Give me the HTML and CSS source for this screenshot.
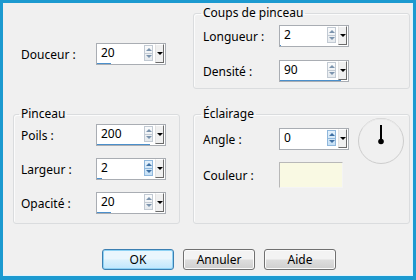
FILE: index.html
```html
<!DOCTYPE html>
<html>
<head>
    <title>Coups de pinceau</title>
    <link rel="stylesheet" href="styles.css">
</head>
<body>
    <div class="dialog">
        <div class="panes">
            <div class="single">
                <div class="row">
                    <label class="lbl">Douceur :</label>
                    <div class="spin">
                        <div class="spin-row"><span class="spin-value">20</span><span class="spin-arrows"><span class="up"></span><span class="down"></span></span><span class="spin-drop"></span></div>
                        <div class="spin-bar" style="width: 20%"></div>
                    </div>
                </div>
            </div>

            <fieldset class="group group-top">
                <legend>Coups de pinceau</legend>
                <div class="rows">
                    <div class="row">
                        <label class="lbl wide">Longueur :</label>
                        <div class="spin">
                            <div class="spin-row"><span class="spin-value">2</span><span class="spin-arrows"><span class="up"></span><span class="down"></span></span><span class="spin-drop"></span></div>
                            <div class="spin-bar" style="width: 2%"></div>
                        </div>
                    </div>
                    <div class="row">
                        <label class="lbl wide">Densité :</label>
                        <div class="spin">
                            <div class="spin-row"><span class="spin-value">90</span><span class="spin-arrows"><span class="up"></span><span class="down"></span></span><span class="spin-drop"></span></div>
                            <div class="spin-bar" style="width: 90%"></div>
                        </div>
                    </div>
                </div>
            </fieldset>

            <fieldset class="group group-brush">
                <legend>Pinceau</legend>
                <div class="rows tight">
                    <div class="row">
                        <label class="lbl">Poils :</label>
                        <div class="spin">
                            <div class="spin-row"><span class="spin-value">200</span><span class="spin-arrows"><span class="up"></span><span class="down"></span></span><span class="spin-drop"></span></div>
                            <div class="spin-bar" style="width: 78%"></div>
                        </div>
                    </div>
                    <div class="row">
                        <label class="lbl">Largeur :</label>
                        <div class="spin">
                            <div class="spin-row"><span class="spin-value">2</span><span class="spin-arrows hot"><span class="up"></span><span class="down"></span></span><span class="spin-drop"></span></div>
                            <div class="spin-bar" style="width: 8%"></div>
                        </div>
                    </div>
                    <div class="row">
                        <label class="lbl">Opacité :</label>
                        <div class="spin">
                            <div class="spin-row"><span class="spin-value">20</span><span class="spin-arrows"><span class="up"></span><span class="down"></span></span><span class="spin-drop"></span></div>
                            <div class="spin-bar" style="width: 20%"></div>
                        </div>
                    </div>
                </div>
            </fieldset>

            <fieldset class="group group-light">
                <legend>Éclairage</legend>
                <div class="light">
                    <div class="rows tight">
                        <div class="row">
                            <label class="lbl wide">Angle :</label>
                            <div class="spin">
                                <div class="spin-row"><span class="spin-value">0</span><span class="spin-arrows hot"><span class="up"></span><span class="down"></span></span><span class="spin-drop"></span></div>
                                <div class="spin-bar" style="width: 0%"></div>
                            </div>
                        </div>
                        <div class="row">
                            <label class="lbl wide">Couleur :</label>
                            <div class="swatch"></div>
                        </div>
                    </div>
                    <!-- angle dial -->
                    <svg class="dial" width="48" height="48" viewBox="0 0 48 48">
                        <circle cx="24" cy="24" r="22.5" fill="none" stroke="#cdcdcd" stroke-width="1"/>
                        <path d="M 6 11 A 22.5 22.5 0 0 1 42 11" fill="none" stroke="#e8e8e8" stroke-width="1.2"/>
                        <line x1="24" y1="8" x2="24" y2="24" stroke="#000" stroke-width="2"/>
                        <circle cx="24" cy="24.5" r="2.8" fill="#000"/>
                    </svg>
                </div>
            </fieldset>
        </div>

        <div class="actions">
            <button class="btn default">OK</button>
            <button class="btn">Annuler</button>
            <button class="btn">Aide</button>
        </div>
    </div>
</body>
</html>
```

FILE: styles.css
```css
body {
    margin: 0;
    font-family: "Noto Sans", "Open Sans", sans-serif;
    font-size: 12px;
    color: #000;
}
.dialog {
    width: 416px;
    height: 280px;
    box-sizing: border-box;
    border: solid #1c9ad0;
    border-width: 3px 3px 4px 3px;
    background: #f0f0f0;
    box-shadow: inset -1px -1px 0 #dcf4ff;
}
.panes {
    display: grid;
    grid-template-columns: 167px 217px;
    grid-template-rows: 83px 117px;
    column-gap: 13px;
    row-gap: 18px;
    padding: 3px 0 0 10px;
}
.single {
    padding: 37px 0 0 8px;
}
.group {
    margin: 0;
    min-width: 0;
    border: 1px solid #dadcde;
    border-radius: 3px;
    box-shadow: inset 1px 1px 0 #fbfbfb;
}
.group legend {
    margin-left: -2px;
    padding: 0 2px;
    line-height: 14px;
}
.group-top {
    padding: 5px 0 0 9px;
}
.group-brush {
    padding: 3px 0 0 7px;
}
.group-light {
    padding: 0 0 0 9px;
}
.rows {
    display: flex;
    flex-direction: column;
    gap: 13px;
}
.rows.tight {
    gap: 12px;
}
.light {
    display: flex;
    align-items: flex-start;
}
.light .rows {
    padding-top: 7px;
}
.dial {
    margin: -4px 0 0 8px;
}
.row {
    display: flex;
    align-items: center;
}
.lbl {
    width: 75px;
    flex: none;
}
.lbl.wide {
    width: 76px;
}
.spin {
    width: 70px;
    height: 22px;
    box-sizing: border-box;
    border: 1px solid #a9adb3;
    background: #fff;
    display: flex;
    flex-direction: column;
}
.spin-row {
    display: flex;
    align-items: flex-start;
    flex: 1;
}
.spin-value {
    flex: 1;
    padding: 1px 0 0 4px;
    line-height: 16px;
}
.spin-arrows {
    width: 9px;
    height: 16px;
    margin-top: 1px;
    box-sizing: border-box;
    border: 1px solid #c2cad3;
    background: linear-gradient(#fafbfc, #e6eaee);
    display: flex;
    flex-direction: column;
}
.spin-arrows span {
    flex: 1;
    display: flex;
    align-items: center;
    justify-content: center;
}
.spin-arrows span + span {
    border-top: 1px solid #c2cad3;
}
.spin-arrows .up::after {
    content: "";
    border-left: 3px solid transparent;
    border-right: 3px solid transparent;
    border-bottom: 3px solid #7b93ad;
}
.spin-arrows .down::after {
    content: "";
    border-left: 3px solid transparent;
    border-right: 3px solid transparent;
    border-top: 3px solid #7b93ad;
}
.spin-arrows.hot {
    border-color: #8fb7dc;
    background: linear-gradient(#e4f1fb, #c6e0f5);
}
.spin-arrows.hot span + span {
    border-top-color: #8fb7dc;
}
.spin-arrows.hot .up::after {
    border-bottom-color: #3d6fa3;
}
.spin-arrows.hot .down::after {
    border-top-color: #3d6fa3;
}
.spin-drop {
    width: 9px;
    height: 19px;
    margin: 0 1px 0 2px;
    box-sizing: border-box;
    border: 1px solid;
    border-color: #fff #6b6b6b #6b6b6b #e2e2e2;
    background: #f0f0f0;
    display: flex;
    align-items: center;
    justify-content: center;
}
.spin-drop::after {
    content: "";
    border-left: 3px solid transparent;
    border-right: 3px solid transparent;
    border-top: 3px solid #000;
}
.spin-bar {
    height: 2px;
    background: #4b8fcb;
}
.swatch {
    width: 64px;
    height: 26px;
    box-sizing: border-box;
    border: 1px solid;
    border-color: #b8b8b8 #f4f4f4 #f4f4f4 #b8b8b8;
    background: #f9f9e3;
}
.actions {
    display: flex;
    gap: 9px;
    padding: 25px 0 0 99px;
}
.btn {
    width: 72px;
    height: 21px;
    padding: 0;
    border: 1px solid #707070;
    border-radius: 3px;
    background: linear-gradient(#f3f3f3 45%, #dddddd 55%, #cfcfcf);
    font-family: "Noto Sans", "Open Sans", sans-serif;
    font-size: 12px;
    color: #000;
    box-shadow: inset 0 0 0 1px #fbfbfb;
}
.btn.default {
    border-color: #3c7fb1;
    background: linear-gradient(#eaf6fd 45%, #d9f0fc 55%, #bee6fd);
    box-shadow: inset 0 0 0 1px #8ed2f4;
}
```
